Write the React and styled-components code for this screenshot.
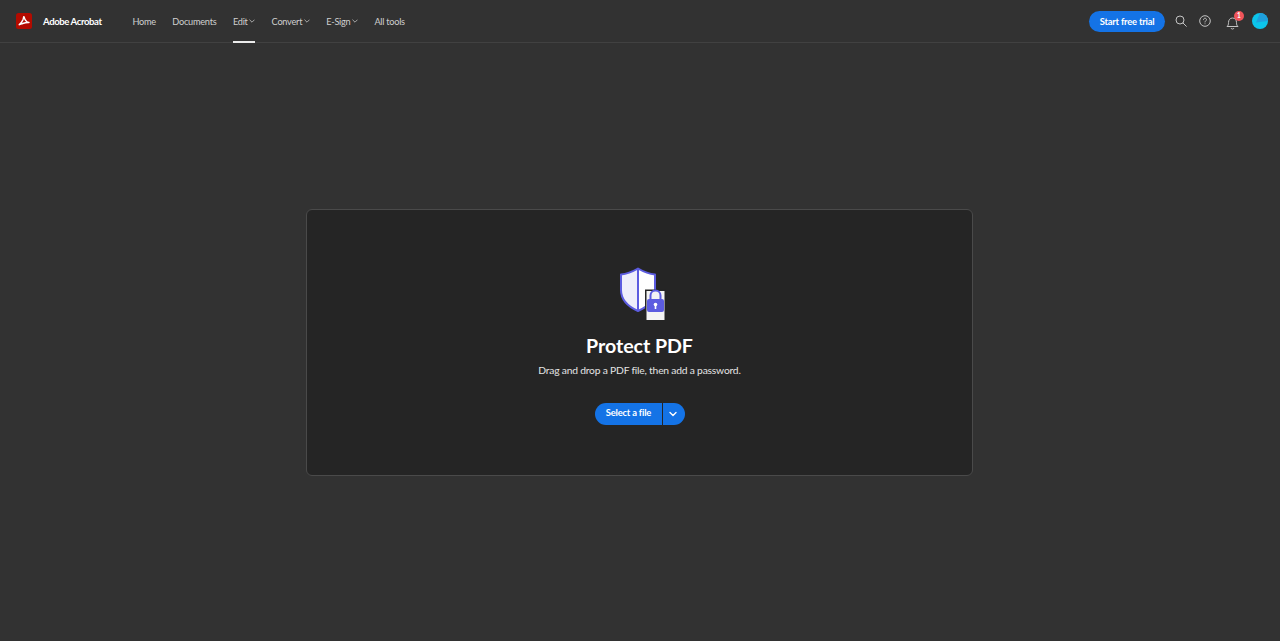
import React from "react";
import styled, { createGlobalStyle } from "styled-components";

const Global = createGlobalStyle`
  html, body { margin: 0; padding: 0; background: #323232; }
  body { font-family: Lato, "Noto Sans", "Liberation Sans", sans-serif; overflow: hidden; }
`;
const Page = styled.div`
  width: 1280px; height: 641px; display: flex; flex-direction: column; background: #323232;
`;
const Header = styled.header`
  height: 42px; flex: none; display: flex; align-items: stretch; padding: 0 11px 0 16px;
  border-bottom: 1px solid #414141;
`;
const Brand = styled.div`
  display: flex; align-items: center; gap: 11px; width: 116.4px;
`;
const BrandName = styled.span`
  font-size: 9.6px; font-weight: 700; color: #fff; white-space: nowrap; letter-spacing: -0.42px;
`;
const Nav = styled.nav`
  display: flex; gap: 16.5px;
`;
const NavItem = styled.a`
  position: relative; display: flex; align-items: center; gap: 1.5px; font-size: 9.2px; color: #cfcfcf;
  white-space: nowrap; letter-spacing: -0.26px;
  ${p => p.$active && `
    &::after { content: ""; position: absolute; left: 0; right: 0; bottom: -1px; height: 2px; background: #ebebeb; }
  `}
`;
const Right = styled.div`
  margin-left: auto; display: flex; align-items: center;
`;
const TrialButton = styled.button`
  width: 76px; height: 21px; border: 0; border-radius: 11px; background: #1473e6; color: #fff;
  font: 700 9.4px Lato, sans-serif; padding: 0; margin-right: 10px; letter-spacing: -0.2px;
`;
const IconSlot = styled.span`
  position: relative; display: flex; align-items: center; justify-content: center;
  width: ${p => p.$w}px; height: 20px;
`;
const Badge = styled.span`
  position: absolute; top: 0; right: -3px; width: 10px; height: 10px; border-radius: 50%; background: #f0555a;
  color: #fff; font-size: 6.5px; font-weight: 700; line-height: 10px; text-align: center;
`;
const Main = styled.main`
  flex: 1; display: flex; padding: 166px 0 0 306px;
`;
const Card = styled.section`
  width: 665px; height: 265px; box-sizing: content-box; background: #252525; border: 1px solid #4a4a4a;
  border-radius: 6px; display: flex; flex-direction: column; align-items: center;
`;
const Art = styled.div`
  margin: 57px 0 0 6px; height: 54px; line-height: 0;
`;
const Title = styled.h1`
  margin: 11px 0 0; font-size: 19.6px; line-height: 27px; font-weight: 700; color: #fff; letter-spacing: -0.05px;
`;
const Sub = styled.p`
  margin: 4px 0 0; font-size: 10.3px; line-height: 14px; color: #e3e3e3; letter-spacing: -0.21px;
`;
const SplitButton = styled.div`
  margin-top: 26px; display: flex; gap: 1px; height: 22px;
`;
const Primary = styled.button`
  width: 67px; border: 0; padding: 0 0 3px 1px; background: #1473e6; color: #fff; border-radius: 11px 0 0 11px;
  font: 700 9.4px Lato, sans-serif; letter-spacing: -0.2px;
`;
const Caret = styled.button`
  width: 22px; border: 0; padding: 0 2px 0 0; background: #1473e6; color: #fff; border-radius: 0 11px 11px 0;
  display: flex; align-items: center; justify-content: center;
`;
const Chevron = ({ size = 6, color = "#cfcfcf", w = 1 }) => (
  <svg width={size} height={size} viewBox="0 0 8 8" fill="none">
    <path d="M1 2.6 4 5.6 7 2.6" stroke={color} strokeWidth={w} strokeLinecap="round" strokeLinejoin="round" />
  </svg>
);
const Logo = () => (
  <svg width="16" height="16" viewBox="0 0 16 16">
    <rect width="16" height="16" rx="2.5" fill="#b30b00" />
    <path d="M3.2 11.7c1.3-.8 2.6-2.6 3.6-4.6.6-1.3.8-2.4.8-3 0-.5.5-.5.6 0 .2 1.400 1.200 3.400 2.400 4.500.6.5 1.500.9 2.400.9-1.800-.1-4.200.2-6.300 1-1.300.5-2.300 1.200-3.500 1.200z" fill="none" stroke="#fff" strokeWidth="1.400" strokeLinejoin="round" />
  </svg>
);
const ProtectArt = () => (
  <svg width="48" height="54" viewBox="0 0 48 54">
    <path d="M2 7.500C8 7 13 5 19 1.500V44C10 40 2 33 2 23z" fill="#eeeefb" />
    <path d="M19 1.500C25 5 30 7 36 7.500V23c0 10-8 17-17 21z" fill="#fff" />
    <path d="M19 1.500C13 5 8 7 2 7.500V23c0 10 8 17 17 21 9-4 17-11 17-21V7.500C30 7 25 5 19 1.500zM19 1.500V44" fill="none" stroke="#5c5ce0" strokeWidth="2" strokeLinejoin="round" />
    <rect x="26" y="22.500" width="20.500" height="31.500" fill="#252525" />
    <rect x="27.500" y="24" width="18" height="29" fill="#f4f4f4" />
    <path d="M31.500 32v-3.500a5 5 0 0 1 10 0V32" fill="none" stroke="#5c5ce0" strokeWidth="2" />
    <rect x="28" y="32" width="17" height="13" rx="2" fill="#5c5ce0" />
    <circle cx="36.500" cy="37.500" r="1.800" fill="#fff" />
    <rect x="35.700" y="38" width="1.600" height="4" fill="#fff" />
  </svg>
);

export default function App() {
  return (
    <Page>
      <Global />
      <Header>
        <Brand>
          <Logo />
          <BrandName>Adobe Acrobat</BrandName>
        </Brand>
        <Nav>
          <NavItem>Home</NavItem>
          <NavItem>Documents</NavItem>
          <NavItem $active>Edit<Chevron /></NavItem>
          <NavItem>Convert<Chevron /></NavItem>
          <NavItem>E-Sign<Chevron /></NavItem>
          <NavItem>All tools</NavItem>
        </Nav>
        <Right>
          <TrialButton>Start free trial</TrialButton>
          <IconSlot $w={12}>
            <svg width="12" height="12" viewBox="0 0 12 12" fill="none" stroke="#c4c4c4" strokeWidth="1">
              <circle cx="5" cy="5" r="4" /><path d="M8 8l3.300 3.300" strokeLinecap="round" />
            </svg>
          </IconSlot>
          <IconSlot $w={36}>
            <svg width="12" height="12" viewBox="0 0 12 12" fill="none" stroke="#c4c4c4" strokeWidth="1">
              <circle cx="6" cy="6" r="5.300" />
              <path d="M4.500 4.700C4.500 3.800 5.200 3.200 6 3.200s1.500.6 1.500 1.400c0 1.200-1.500 1.200-1.500 2.400" strokeLinecap="round" />
              <circle cx="6" cy="8.800" r=".5" fill="#c4c4c4" stroke="none" />
            </svg>
          </IconSlot>
          <IconSlot $w={18}>
            <svg width="13" height="14" viewBox="0 0 13 14" fill="none" stroke="#c4c4c4" strokeWidth="1" style={{ marginTop: 3, marginLeft: 1 }}>
              <path d="M1 10.500c1.200-1 1.500-2 1.500-4C2.500 4 4 2 6.500 2s4 2 4 4.500c0 2 .3 3 1.500 4z" strokeLinejoin="round" />
              <path d="M5 12a1.600 1.600 0 0 0 3 0" />
            </svg>
            <Badge>1</Badge>
          </IconSlot>
          <IconSlot $w={28}>
            <svg width="16" height="16" viewBox="0 0 16 16" style={{ marginLeft: 9 }}>
              <circle cx="8" cy="8" r="8" fill="#0cc4ea" />
              <path d="M8 0a8 8 0 0 1 8 8L4 9.500z" fill="#1f9fdc" />
            </svg>
          </IconSlot>
        </Right>
      </Header>
      <Main>
        <Card>
          <Art><ProtectArt /></Art>
          <Title>Protect PDF</Title>
          <Sub>Drag and drop a PDF file, then add a password.</Sub>
          <SplitButton>
            <Primary>Select a file</Primary>
            <Caret><Chevron size={8} color="#fff" w={1.400} /></Caret>
          </SplitButton>
        </Card>
      </Main>
    </Page>
  );
}
